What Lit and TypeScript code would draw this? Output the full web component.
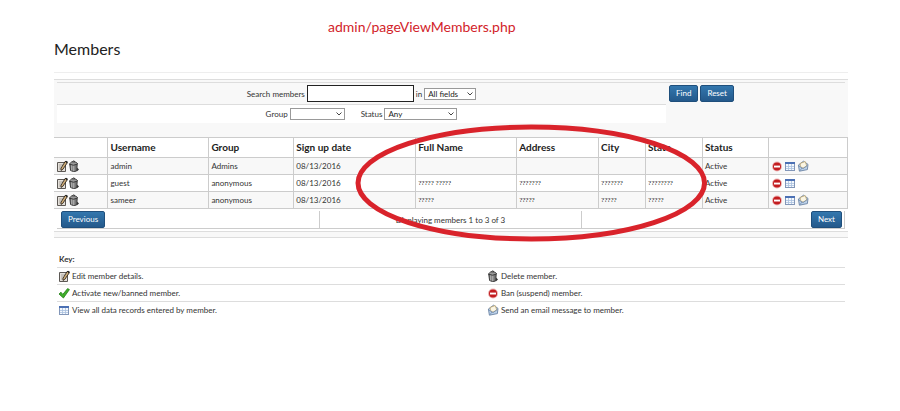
import { LitElement, html, css, svg, nothing } from "lit";
import { customElement, property } from "lit/decorators.js";

type IconName = "edit" | "trash" | "ban" | "records" | "mail" | "check" | "chevron";

const glyphs = {
  edit: svg`
    <path d="M1.5 2.5H9.5V11.5H1.5Z" fill="#e4e0da" stroke="#5c5854"/>
    <path d="M3 5H7M3 7H5M3 9H5" stroke="#aaa49c"/>
    <path d="M9.2 1.4L11.4 2.6L6.8 9.4L5 10.4L5 8.2Z" fill="#d0ae78" stroke="#2d2620" stroke-width=".9"/>
    <path d="M9 1.6L10 .8L11.8 1.8L11 3.2Z" fill="#222"/>`,
  trash: svg`
    <path d="M1.8 4.5L2.6 10.5Q5.5 12.4 8.6 11L9.2 4.5Z" fill="#777" stroke="#3c3c3c"/>
    <path d="M3.8 5V10.5M5.8 5.4V11" stroke="#d0d0d0" stroke-width=".8"/>
    <path d="M1.2 4.2L3.8 1.8L7.8 2L9.8 4L5.5 5.2Z" fill="#9a9a9a" stroke="#333" stroke-width=".9"/>
    <path d="M4.4 1.6Q5.6 .3 7 1.6" fill="none" stroke="#333"/>
    <path d="M9 7.6L11 9.4L9 11.2Z" fill="#333"/>`,
  ban: svg`
    <circle cx="6" cy="6.5" r="5" fill="#ecb4b4"/>
    <circle cx="6" cy="6.5" r="4" fill="#c31d20"/>
    <rect x="3" y="5.6" width="6" height="1.9" fill="#fff"/>`,
  records: svg`
    <rect x="1.5" y="2.5" width="9" height="8" fill="#f4f8fd" stroke="#8296b8"/>
    <rect x="1" y="2" width="10" height="2" fill="#4b70b4"/>
    <path d="M2 6.5H10M2 8.5H10M4.5 4V10M7.5 4V10" stroke="#aac0de" stroke-width=".8"/>`,
  mail: svg`
    <path d="M1.4 5L6.5 1.2L11 4.4L10.4 9.6L2.4 11.2Z" fill="#bdd2ea" stroke="#6b83a4" stroke-width=".9"/>
    <path d="M3.2 3.4L8.2 1.6L9.8 6L6 8.2L3.4 6.6Z" fill="#fbf6e4" stroke="#b79c5e" stroke-width=".7"/>
    <path d="M1.8 6L6 8.6L10.4 5.4M2.6 11L5 8" fill="none" stroke="#6f8cb4" stroke-width=".8"/>`,
  check: svg`
    <path d="M1 7L3 5.2L4.8 7.4L9.6 1.6L11.4 2.6L5.4 11Z" fill="#3fae2a" stroke="#1f7d14" stroke-width=".8"/>`,
  chevron: svg`<path d="M3.5 4.5L6 7L8.5 4.5" fill="none" stroke="#444"/>`,
};

@customElement("ui-icon")
class UiIcon extends LitElement {
  @property() name: IconName = "edit";
  static styles = css`
    :host { display: block; width: 12px; height: 12px; flex: none; }
    .glyph { display: block; width: 12px; height: 12px; }
  `;
  render() {
    return html`<svg class="glyph" viewBox="0 0 12 12" aria-hidden="true">${glyphs[this.name]}</svg>`;
  }
}

interface Member {
  username: string; group: string; date: string; name: string;
  address: string; city: string; state: string; mail: boolean;
}

const members: Member[] = [
  { username: "admin", group: "Admins", date: "08/13/2016", name: "", address: "", city: "", state: "", mail: true },
  { username: "guest", group: "anonymous", date: "08/13/2016", name: "????? ?????", address: "???????", city: "???????", state: "????????", mail: false },
  { username: "sameer", group: "anonymous", date: "08/13/2016", name: "?????", address: "?????", city: "?????", state: "?????", mail: true },
];

const columns: [string, number][] = [
  ["", 54], ["Username", 101], ["Group", 85], ["Sign up date", 122], ["Full Name", 101],
  ["Address", 82], ["City", 47], ["State", 57], ["Status", 66], ["", 79],
];
const total = columns.reduce((sum, [, w]) => sum + w, 0);

const legend: [IconName, string][] = [
  ["edit", "Edit member details."], ["trash", "Delete member."],
  ["check", "Activate new/banned member."], ["ban", "Ban (suspend) member."],
  ["records", "View all data records entered by member."], ["mail", "Send an email message to member."],
];

@customElement("app-root")
class AppRoot extends LitElement {
  static styles = css`
    :host {
      display: block;
      padding: 18px 52px 24px 54px;
      background: #fff;
      color: #333;
      font: 8px/16px Lato, "Open Sans", sans-serif;
    }
    * { box-sizing: border-box; }
    .note { margin: 0 0 0 274px; color: #d2232a; font-size: 14px; line-height: 18px; }
    .title { margin: 0; padding: 2px 0 12px; font-size: 16px; line-height: 22px; font-weight: 400; color: #222; border-bottom: 1px solid #eee; }
    .panel { position: relative; margin-top: 6px; border-top: 1px solid #ddd; background: #f8f8f8; border-bottom: 1px solid #ddd; }
    .filters { display: grid; grid-template-columns: 609fr 179fr; margin: 2px 3px 0; padding-bottom: 14px; border-top: 1px solid #ddd; }
    .line { display: flex; justify-content: center; align-items: center; }
    .line.first { height: 22px; gap: 2px; border-bottom: 1px solid #ddd; }
    .line.second { height: 18px; gap: 16px; background: #fff; }
    .field { display: flex; align-items: center; gap: 2px; }
    .query { width: 107px; height: 17px; padding: 0 4px; border: 1px solid #222; background: #fff; font: inherit; }
    .pick { display: grid; align-items: center; }
    .pick > * { grid-area: 1 / 1; }
    .pick ui-icon { justify-self: end; pointer-events: none; }
    .select { appearance: none; height: 12px; padding: 0 12px 0 3px; border: 1px solid #999; border-radius: 0; background: #fff; color: #222; font: inherit; line-height: 10px; }
    .small { width: 52px; }
    .group { width: 55px; }
    .status { width: 73px; }
    .actions { display: flex; gap: 2px; padding: 2px 3px; align-items: flex-start; }
    .button { height: 17px; padding: 0 6px; border: 1px solid #1f4f7c; border-radius: 2px; background: linear-gradient(#3377ae, #24598b); color: #fff; font: inherit; line-height: 15px; }
    .members { width: 100%; border-collapse: collapse; table-layout: fixed; background: #fff; }
    .members th, .members td { padding: 0 0 0 2px; border: 1px solid #ccc; text-align: left; white-space: nowrap; }
    .members tr > :first-child { border-left: 0; }
    .members th { height: 20px; font-size: 10px; line-height: 19px; color: #222; }
    .members td { height: 17px; }
    .members .unread { font-family: "Liberation Sans Narrow", "Liberation Serif", serif; font-size: 7px; color: #111; }
    .members tbody tr:nth-child(odd) { background: #f8f8f8; }
    .tools { display: flex; }
    .tools.wide { gap: 1px; }
    .pager { display: grid; grid-template-columns: repeat(3, 1fr); padding: 2px 3px 0; background: #fff; }
    .cell { display: flex; justify-content: center; height: 18px; border-right: 1px solid #ccc; border-bottom: 1px solid #ccc; line-height: 18px; }
    .cell.start { justify-content: flex-start; padding-left: 4px; }
    .cell.end { justify-content: flex-end; padding-right: 2px; }
    .foot { height: 6px; background: #f8f8f8; border-top: 1px solid #ddd; box-shadow: 0 -2px #fff; margin-top: 2px; }
    .key { margin: 14px 3px 0; }
    .caption { margin: 0; font-size: 8px; line-height: 15px; font-weight: 700; padding-left: 2px; }
    .legend { display: grid; grid-template-columns: 429fr 359fr; margin: 0; padding: 0; list-style: none; }
    .item { display: flex; align-items: center; gap: 2px; height: 17px; padding-left: 1px; border-top: 1px solid #ddd; }
    .ring { position: absolute; left: 37.9%; top: 44px; width: 44.4%; height: 118px; overflow: visible; pointer-events: none; }
  `;

  render() {
    return html`
      <p class="note">admin/pageViewMembers.php</p>
      <h1 class="title">Members</h1>
      <section class="panel">
        <form class="filters" @submit=${(e: Event) => e.preventDefault()}>
          <div>
            <div class="line first">
              <label class="field">Search members <input class="query" type="text" /></label>
              <label class="field">in
                <span class="pick"><select class="select small"><option>All fields</option></select><ui-icon name="chevron"></ui-icon></span>
              </label>
            </div>
            <div class="line second">
              <label class="field">Group
                <span class="pick"><select class="select group"><option></option></select><ui-icon name="chevron"></ui-icon></span>
              </label>
              <label class="field">Status
                <span class="pick"><select class="select status"><option>Any</option></select><ui-icon name="chevron"></ui-icon></span>
              </label>
            </div>
          </div>
          <div class="actions">
            <button class="button" type="submit">Find</button>
            <button class="button" type="reset">Reset</button>
          </div>
        </form>
        <table class="members">
          <colgroup>${columns.map(([, w]) => html`<col style="width:${(w / total) * 100}%" />`)}</colgroup>
          <thead><tr>${columns.map(([label]) => html`<th scope="col">${label}</th>`)}</tr></thead>
          <tbody>
            ${members.map((m) => html`<tr>
              <td><div class="tools">${this.tool("edit", "Edit")}${this.tool("trash", "Delete")}</div></td>
              <td>${m.username}</td><td>${m.group}</td><td>${m.date}</td>
              ${[m.name, m.address, m.city, m.state].map((text) => html`<td class="unread">${text}</td>`)}
              <td>Active</td>
              <td><div class="tools wide">${this.tool("ban", "Ban")}${this.tool("records", "View records")}${m.mail ? this.tool("mail", "Send email") : nothing}</div></td>
            </tr>`)}
          </tbody>
        </table>
        <div class="pager">
          <div class="cell start"><button class="button" type="button">Previous</button></div>
          <div class="cell">Displaying members 1 to 3 of 3</div>
          <div class="cell end"><button class="button" type="button">Next</button></div>
        </div>
        <div class="foot"></div>
        <svg class="ring" viewBox="0 0 352 118" preserveAspectRatio="none" aria-hidden="true">
          <ellipse cx="176" cy="59" rx="173" ry="56" fill="none" stroke="#d9232b" stroke-width="5" vector-effect="non-scaling-stroke" />
        </svg>
      </section>
      <section class="key">
        <h2 class="caption">Key:</h2>
        <ul class="legend">
          ${legend.map(([icon, text]) => html`<li class="item"><ui-icon name=${icon}></ui-icon>${text}</li>`)}
        </ul>
      </section>
    `;
  }

  private tool(icon: IconName, label: string) {
    return html`<a href="#" aria-label=${label}><ui-icon name=${icon}></ui-icon></a>`;
  }
}
